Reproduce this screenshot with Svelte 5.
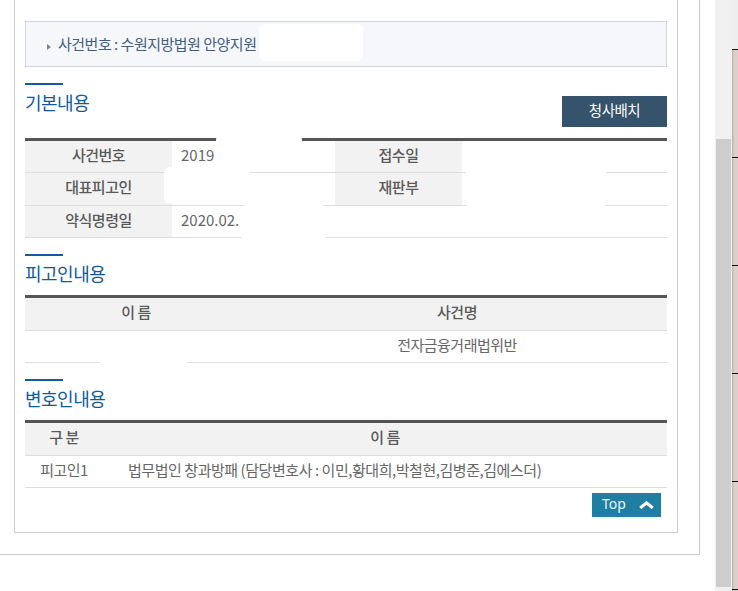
<script>
	const basic = [
		['사건번호', '2019', '접수일', ''],
		['대표피고인', '', '재판부', ''],
		['약식명령일', '2020.02.', '', '']
	];
	const blocks = ['b-notice', 'b-no', 'b-rep', 'b-date', 'b-court', 'b-name'];
	const stripLines = [49, 157, 265, 373, 481, 589];
</script>

<div class="page">
	<main class="outer">
		<div class="inner">
			<div class="notice"><i class="arrow"></i>사건번호 : 수원지방법원 안양지원</div>

			<section class="head first">
				<h2>기본내용</h2>
				<button class="assign">청사배치</button>
			</section>
			<table class="basic">
				<colgroup><col class="c1" /><col class="c2" /><col class="c3" /><col /></colgroup>
				<tbody>
					{#each basic as row}
						<tr>
							<th>{row[0]}</th>
							<td>{row[1]}</td>
							{#if row[2]}
								<th>{row[2]}</th>
							{:else}
								<td></td>
							{/if}
							<td>{row[3]}</td>
						</tr>
					{/each}
				</tbody>
			</table>

			<section class="head">
				<h2>피고인내용</h2>
			</section>
			<table class="list">
				<colgroup><col class="c-name" /><col /></colgroup>
				<thead>
					<tr><th>이 름</th><th>사건명</th></tr>
				</thead>
				<tbody>
					<tr><td></td><td>전자금융거래법위반</td></tr>
				</tbody>
			</table>

			<section class="head">
				<h2>변호인내용</h2>
			</section>
			<table class="list">
				<colgroup><col class="c-kind" /><col /></colgroup>
				<thead>
					<tr><th>구 분</th><th>이 름</th></tr>
				</thead>
				<tbody>
					<tr>
						<td>피고인1</td>
						<td class="left">법무법인 창과방패 (담당변호사 : 이민,황대희,박철현,김병준,김에스더)</td>
					</tr>
				</tbody>
			</table>

			<div class="top-row">
				<a class="top" href="#top">
					<span class="top-label">Top</span>
					<svg width="15" height="8" viewBox="0 0 15 8" aria-hidden="true">
						<path d="M1.2 7 L7.5 1.8 L13.8 7" fill="none" stroke="#fff" stroke-width="3" />
					</svg>
				</a>
			</div>
		</div>

		{#each blocks as cls}
			<div class="block {cls}"></div>
		{/each}
	</main>

	<div class="scrollbar"><div class="thumb"></div></div>

	<div class="strip">
		{#each stripLines as y, i}
			<span class="tick" style="height: {i === 0 ? y : 107}px"></span>
		{/each}
	</div>
</div>

<style>
	:global(body) {
		margin: 0;
		background: #fff;
		overflow: hidden;
	}

	.page {
		display: flex;
		width: 738px;
		height: 591px;
		font-family: "Noto Sans CJK KR", "Noto Sans", sans-serif;
		font-size: 15px;
		letter-spacing: -0.5px;
		color: #666;
	}

	.outer {
		position: relative;
		box-sizing: border-box;
		width: 700px;
		height: 555px;
		padding-left: 14px;
		padding-right: 21px;
		border-right: 1px solid #ccc;
		border-bottom: 1px solid #ccc;
	}

	.inner {
		box-sizing: border-box;
		height: 533px;
		padding: 21px 10px 0;
		border: 1px solid #ccc;
		border-top: 0;
	}

	.notice {
		display: flex;
		align-items: center;
		box-sizing: border-box;
		height: 46px;
		padding: 0 0 2px 21px;
		border: 1px solid #d0d3de;
		background: #f6f7fb;
		color: #3f5d82;
	}

	.arrow {
		width: 0;
		height: 0;
		margin: 7px 7px 0 0;
		border-left: 4px solid #7d8794;
		border-top: 3px solid transparent;
		border-bottom: 3px solid transparent;
	}

	.head {
		display: flex;
		justify-content: space-between;
		align-items: flex-start;
		position: relative;
		height: 41px;
		margin-top: 16px;
	}

	.head::before {
		content: "";
		position: absolute;
		left: 0;
		top: 0;
		width: 38px;
		height: 2px;
		background: #155a9e;
	}

	.head.first {
		height: 44px;
		margin-bottom: 11px;
	}

	h2 {
		margin: 1px 0 0;
		font-size: 18px;
		font-weight: 400;
		line-height: 36px;
		color: #0f5a9c;
	}

	.assign {
		align-self: flex-end;
		width: 105px;
		height: 31px;
		padding: 0 0 4px;
		border: 0;
		background: #36536d;
		color: #fff;
		font: inherit;
		font-size: 14.5px;
		letter-spacing: inherit;
	}

	table {
		width: 100%;
		table-layout: fixed;
		border-collapse: separate;
		border-spacing: 0;
		border-top: 3px solid #555;
	}

	th, td {
		box-sizing: border-box;
		padding: 0 0 5px;
		height: 32px;
		border-bottom: 1px solid #ddd;
		text-align: center;
		font-weight: 400;
	}

	th {
		background: #f2f2f2;
		color: #5a5a5a;
		font-weight: 500;
	}

	.c1 { width: 147px; }
	.c2 { width: 163px; }
	.c3 { width: 127px; }
	.c-name { width: 222px; }
	.c-kind { width: 78px; }

	.basic td {
		padding-left: 9px;
		text-align: left;
		letter-spacing: 0;
	}

	.basic tr:nth-child(2) th, .basic tr:nth-child(2) td {
		height: 33px;
	}

	thead th {
		height: 33px;
	}

	td.left {
		padding-left: 25px;
		text-align: left;
		letter-spacing: -0.45px;
	}

	.top-row {
		display: flex;
		justify-content: flex-end;
		padding: 5px 6px 0 0;
	}

	.top {
		display: flex;
		align-items: center;
		justify-content: space-between;
		box-sizing: border-box;
		width: 69px;
		height: 24px;
		padding: 0 7px 0 10px;
		background: #1f7fa3;
		color: #e4f6fb;
		font-family: "Noto Sans", sans-serif;
		font-size: 14px;
		letter-spacing: 0;
		text-decoration: none;
	}

	.top-label {
		margin-top: -3px;
	}

	.block {
		position: absolute;
		background: #fff;
	}

	.b-notice { left: 259px; top: 24px; width: 104px; height: 37px; border-radius: 6px; }
	.b-no { left: 216px; top: 136px; width: 86px; height: 36px; border-radius: 4px; }
	.b-rep { left: 164px; top: 167px; width: 86px; height: 37px; border-radius: 6px; }
	.b-date { left: 240px; top: 205px; width: 87px; height: 35px; border-radius: 6px; }
	.b-court { left: 466px; top: 141px; width: 140px; height: 66px; border-radius: 4px; }
	.b-name { left: 100px; top: 345px; width: 87px; height: 20px; border-radius: 4px; }

	.scrollbar {
		box-sizing: border-box;
		width: 17px;
		margin-left: 15px;
		height: 591px;
		padding: 139px 1px 4px;
		background: #f0f0f0;
	}

	.thumb {
		height: 100%;
		background: #cdcdcd;
	}

	.strip {
		flex: 1;
		background: linear-gradient(90deg, #b9aeac, #dccfcc 40%);
	}

	.tick {
		display: block;
		box-sizing: content-box;
		border-bottom: 1px solid #111;
	}

	.tick:first-child {
		background: #eee;
	}
</style>
